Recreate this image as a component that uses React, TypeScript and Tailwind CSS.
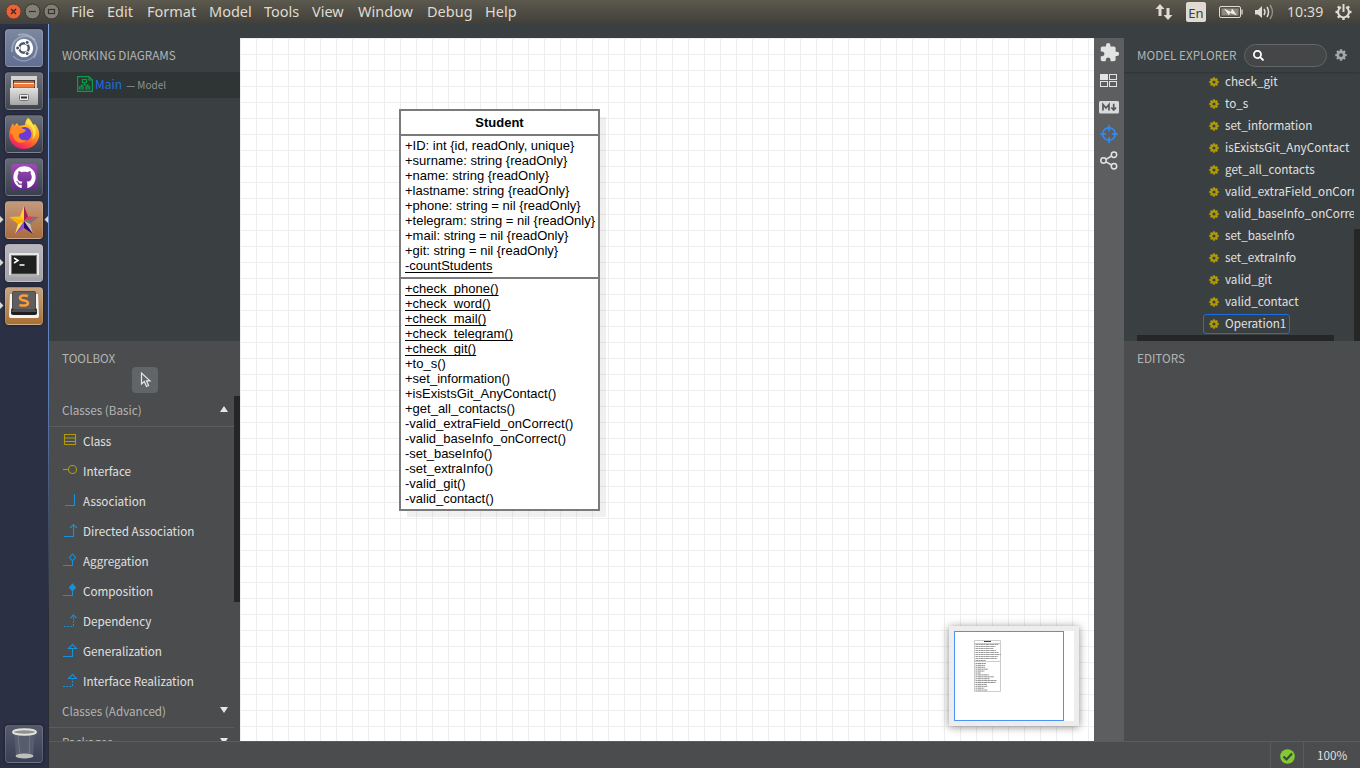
import React from "react";
import { FaSearch, FaGithub } from "react-icons/fa";
import { MdExtension } from "react-icons/md";

const attributes = [
  "+ID: int {id, readOnly, unique}",
  "+surname: string {readOnly}",
  "+name: string {readOnly}",
  "+lastname: string {readOnly}",
  "+phone: string = nil {readOnly}",
  "+telegram: string = nil {readOnly}",
  "+mail: string = nil {readOnly}",
  "+git: string = nil {readOnly}",
];

const staticOps = ["+check_phone()", "+check_word()", "+check_mail()", "+check_telegram()", "+check_git()"];

const operations = [
  "+to_s()",
  "+set_information()",
  "+isExistsGit_AnyContact()",
  "+get_all_contacts()",
  "-valid_extraField_onCorrect()",
  "-valid_baseInfo_onCorrect()",
  "-set_baseInfo()",
  "-set_extraInfo()",
  "-valid_git()",
  "-valid_contact()",
];

const explorer = [
  "check_git",
  "to_s",
  "set_information",
  "isExistsGit_AnyContact",
  "get_all_contacts",
  "valid_extraField_onCorrect",
  "valid_baseInfo_onCorrect",
  "set_baseInfo",
  "set_extraInfo",
  "valid_git",
  "valid_contact",
];

function Gear({ className, color }: { className: string; color: string }) {
  return (
    <svg className={className} viewBox="-8 -8 16 16" fill="none" stroke={color}>
      <circle r="4.2" strokeWidth="3.4" />
      {[0, 45, 90, 135].map((a) => (
        <path key={a} d="M0 -7.6V-5M0 5V7.6" strokeWidth="3" transform={`rotate(${a})`} />
      ))}
    </svg>
  );
}

function Tile({ className, children }: { className: string; children: React.ReactNode }) {
  return (
    <div
      className={`flex h-[38px] w-[38px] shrink-0 items-center justify-center rounded-[4px] border border-white/15 shadow-[0_0_3px_rgba(0,0,0,0.5)] ${className}`}
    >
      {children}
    </div>
  );
}

function Launcher() {
  return (
    <aside className="relative flex w-[49px] shrink-0 flex-col items-start gap-[5px] bg-[#2b3044] pt-[5px] pb-[5px] pl-[5px]">
      <Tile className="bg-linear-to-b from-[#7c879f] to-[#626e93]">
        <svg className="h-9 w-9" viewBox="0 0 36 36" fill="none">
          <path d="M6 22C5 9 18 1 29 10" stroke="#aab3c6" strokeWidth="2" opacity=".7" />
          <path d="M12 5C25 1 36 14 28 28" stroke="#c0c8d6" strokeWidth="1.5" opacity=".6" />
          <path d="M31 17C30 31 16 35 7 26" stroke="#aab3c6" strokeWidth="1.5" opacity=".6" />
          <circle cx="18" cy="18" r="9.2" fill="#fff" />
          <circle cx="18" cy="18" r="4.8" stroke="#4d5569" strokeWidth="2.4" />
          <g fill="#4d5569" stroke="#fff" strokeWidth="1">
            <circle cx="11.6" cy="18" r="2" />
            <circle cx="21.2" cy="12.4" r="2" />
            <circle cx="21.2" cy="23.6" r="2" />
          </g>
        </svg>
      </Tile>
      <Tile className="bg-linear-to-b from-[#6d7078] to-[#42464f]">
        <svg className="h-9 w-9" viewBox="0 0 36 36">
          <defs>
            <linearGradient id="cabinet" x2="0" y2="1">
              <stop stopColor="#e2e2e2" />
              <stop offset="1" stopColor="#a5a5a5" />
            </linearGradient>
          </defs>
          <path d="M5 3H31V16H5Z" fill="#d3d3d1" />
          <path d="M7 7H29V15H7Z" fill="#4b3932" />
          <path d="M8 8H28V15H8Z" fill="#b9683c" />
          <path d="M7.500 10.500H28.500V14H7.500Z" fill="#ee7a3c" />
          <path d="M8 10.500H28" stroke="#fff0df" />
          <path d="M4 15H32V31Q32 32 31 32H5Q4 32 4 31Z" fill="url(#cabinet)" />
          <rect x="13.500" y="21.500" width="9" height="6" rx="1" fill="#eee" stroke="#777" />
          <rect x="15" y="23.500" width="6" height="2" fill="#333" />
        </svg>
      </Tile>
      <Tile className="bg-linear-to-b from-[#6b6f7a] to-[#3a3f4e]">
        <svg className="h-9 w-9" viewBox="0 0 36 36">
          <defs>
            <linearGradient id="fox" x1=".8" y1="0" x2=".3" y2="1">
              <stop stopColor="#fff04a" />
              <stop offset=".4" stopColor="#ffa21f" />
              <stop offset=".75" stopColor="#ff4b3b" />
              <stop offset="1" stopColor="#e5157a" />
            </linearGradient>
          </defs>
          <path d="M22 2C24 3 26 6 27 9L29 8C32 12 34 16 33 21C31 29 25 33 18 33C10 33 3 27 3 19C3 14 5 10 7 7L8 10L11 7L13 10C16 9 18 9 19 9C19 6 20 4 22 2Z" fill="url(#fox)" />
          <circle cx="18.500" cy="18" r="7" fill="#6b3bd8" />
          <path d="M4 17C5 11 11 8 15 12L20 14C18 18 14 16 13 19C12 23 17 25 21 24C16 29 8 27 7 19Z" fill="#ff8a22" />
          <path d="M20 7C27 10 29 17 26 24C33 18 29 9 22 3Z" fill="#ffe14a" />
        </svg>
      </Tile>
      <Tile className="bg-linear-to-b from-[#656975] to-[#3a3f4e]">
        <div className="flex h-[26px] w-[26px] items-center justify-center rounded-[4px] bg-linear-to-b from-[#a04cb4] to-[#63298b]">
          <FaGithub className="h-[23px] w-[23px] text-white" />
        </div>
      </Tile>
      <Tile className="bg-linear-to-b from-[#c29a7c] to-[#a96c3d]">
        <svg className="h-9 w-9" viewBox="0 0 36 36">
          <path d="M18 4L14 14.500L18 19Z" fill="#ffcf2a" />
          <path d="M18 4L22 14.500L18 19Z" fill="#a51e49" />
          <path d="M33 15L22 14.500L18 19Z" fill="#ec3463" />
          <path d="M33 15L24 22L18 19Z" fill="#777" />
          <path d="M27 32L24 22L18 19Z" fill="#c4c4c4" />
          <path d="M27 32L18 26V19Z" fill="#2a0873" />
          <path d="M9 32L18 26V19Z" fill="#8b4be0" />
          <path d="M9 32L12 22L18 19Z" fill="#ffe04f" />
          <path d="M3 15L12 22L18 19Z" fill="#ffb000" />
          <path d="M3 15L14 14.500L18 19Z" fill="#ffc21c" />
        </svg>
      </Tile>
      <Tile className="bg-linear-to-b from-[#b9b7bd] to-[#a2a1a8]">
        <svg className="h-9 w-9" viewBox="0 0 36 36">
          <rect x="3" y="8" width="30" height="24" rx="1" fill="#e7e7e5" />
          <path d="M3 31H33" stroke="#777" />
          <rect x="5.500" y="10.500" width="25" height="18.500" fill="#1f2020" stroke="#777" />
          <path d="M8 13L12 15.500L8 18M13.500 20H18.500" fill="none" stroke="#fff" strokeWidth="1.500" />
        </svg>
      </Tile>
      <Tile className="bg-linear-to-b from-[#c6a382] to-[#a87132]">
        <svg className="h-9 w-9" viewBox="0 0 36 36">
          <path d="M4 6H32L33 28Q33 30 31 30H5Q3 30 3 28Z" fill="#f4f4f4" />
          <rect x="5" y="20" width="26" height="7" rx="2" fill="#1f1f1f" />
          <path d="M5.500 23H30.500" stroke="#999" strokeWidth=".8" />
          <rect x="6" y="3" width="24" height="19" rx="2" fill="#4c4c4c" />
          <rect x="7" y="4" width="22" height="17" rx="1" fill="#5f5f5f" />
          <path d="M22 8C19 7 14 7 14 10C14 13.500 22 11.500 22 15C22 18 17 18 13.500 17" fill="none" stroke="#ff9b38" strokeWidth="2.500" />
        </svg>
      </Tile>
      <div className="flex-1" />
      <Tile className="bg-linear-to-b from-[#555a6b] to-[#3a4055]">
        <svg className="h-9 w-9" viewBox="0 0 36 36">
          <path d="M8 7L10 30Q18 34 27 30L29 7Z" fill="#575d6c" />
          <path d="M12 9L14 30M24 9L23 30" stroke="#8a8f98" opacity=".5" />
          <ellipse cx="18.500" cy="30" rx="9" ry="2.500" fill="#bfc0ba" />
          <ellipse cx="18.500" cy="6" rx="11.500" ry="2.800" fill="#8f918f" stroke="#e3e3dd" strokeWidth="2" />
        </svg>
      </Tile>
      <svg className="absolute top-0 left-0 h-[320px] w-[49px]" viewBox="0 24 49 320" fill="#d8d8d8">
        <path d="M0 216L3.500 219.500L0 223ZM0 259L3.500 262.500L0 266ZM0 302L3.500 305.500L0 309ZM48 216L44.500 219.500L48 223Z" />
      </svg>
      <div className="absolute top-0 right-0 h-full w-px bg-linear-to-b from-[#7ea6e2] via-[#5a7fb8] via-50% to-[#2a2c33] to-80%" />
    </aside>
  );
}

function MenuBar() {
  const cls = "shrink-0 whitespace-nowrap";
  return (
    <header className="flex h-6 shrink-0 items-center bg-linear-to-b from-[#5c594f] to-[#413f39] font-['Noto_Sans','Open_Sans',sans-serif] text-[14.500px] text-[#dfdbd2]">
      <svg className="h-6 w-[71px] shrink-0" viewBox="0 0 71 24" fill="none">
        <circle cx="13.500" cy="11.500" r="7.500" fill="#ea6238" stroke="#66402f" />
        <path d="M11 9L16 14M16 9L11 14" stroke="#4b2418" strokeWidth="1.400" />
        <circle cx="32.500" cy="11.500" r="7.500" fill="#817f76" stroke="#37352f" />
        <path d="M29 11.500H36" stroke="#36342f" strokeWidth="1.200" />
        <circle cx="51.500" cy="11.500" r="7.500" fill="#817f76" stroke="#37352f" />
        <rect x="48.500" y="9.500" width="6" height="4" stroke="#36342f" strokeWidth="1.200" />
      </svg>
      <nav className="flex flex-1 pb-0.5 leading-[22px]">
        <span className={`${cls} w-9`}>File</span>
        <span className={`${cls} w-10`}>Edit</span>
        <span className={`${cls} w-[62px]`}>Format</span>
        <span className={`${cls} w-[55px]`}>Model</span>
        <span className={`${cls} w-12`}>Tools</span>
        <span className={`${cls} w-[46px]`}>View</span>
        <span className={`${cls} w-[69px]`}>Window</span>
        <span className={`${cls} w-[58px]`}>Debug</span>
        <span className={cls}>Help</span>
      </nav>
      <svg className="mr-[13px] h-6 w-[18px]" viewBox="1155 0 18 24" fill="#dfdbd2">
        <path d="M1160 4L1164.500 9H1161.500V16H1158.500V9H1155.500ZM1168 20L1163.500 15H1166.500V8H1169.500V15H1172.500Z" />
      </svg>
      <span className="flex h-5 w-5 items-center justify-center rounded-[2px] bg-[#dfdbd2] pt-[2px] text-[13px] leading-[18px] text-[#3c3b37]">En</span>
      <svg className="ml-3 h-6 w-[26px]" viewBox="1218 0 26 24" fill="none">
        <rect x="1219.500" y="6.500" width="21" height="11" rx="1.500" stroke="#dfdbd2" />
        <rect x="1221.500" y="8.500" width="17" height="7" fill="#8d8a82" />
        <path d="M1242 9.500V14.500" stroke="#dfdbd2" strokeWidth="1.300" />
        <path d="M1224 8.500L1231 12L1232 8.500L1237 15.500L1230 12.800L1229 15.500Z" fill="#f2eee4" />
      </svg>
      <svg className="ml-[10px] h-6 w-5" viewBox="1254 0 20 24" fill="none" stroke="#dfdbd2">
        <path d="M1255 10H1258L1262 6V18L1258 14.500H1255Z" fill="#dfdbd2" stroke="none" />
        <path d="M1264 9Q1266 12 1264 15" strokeWidth="1.500" />
        <path d="M1267 7Q1270 12 1267 17" strokeWidth="1.500" />
        <path d="M1270 5Q1275 12 1270 19" strokeWidth="1.300" opacity=".5" />
      </svg>
      <span className="ml-[13px] w-[48px] text-[14.200px] leading-6 pb-px">10:39</span>
      <svg className="mr-[8px] h-6 w-[17px]" viewBox="-8.500 -12 17 24" fill="none" stroke="#dfdbd2">
        <path d="M-2.500 -4.800A5.400 5.400 0 1 0 2.500 -4.800" strokeWidth="2" />
        <path d="M0 -8V0" strokeWidth="2" />
        {[45, 90, 135, 180, 225, 270, 315].map((a) => (
          <path key={a} d="M0 -8V-5.500" strokeWidth="2.400" transform={`rotate(${a})`} />
        ))}
      </svg>
    </header>
  );
}

function ToolIcon({ name }: { name: string }) {
  const base = "M0 12.500H9.500";
  return (
    <svg className="h-4 w-[15px] shrink-0" viewBox="0 0 15 16" fill="none" stroke={name === "Class" || name === "Interface" ? "#b09a07" : "#1d8fd6"} strokeWidth="1.100">
      {name === "Class" && <path d="M1.500 1.500H12.500V11.500H1.500ZM1.500 5H12.500M1.500 8.500H12.500" />}
      {name === "Interface" && (
        <>
          <path d="M0 6.500H5.500" />
          <circle cx="9.500" cy="6.500" r="4" />
        </>
      )}
      {name === "Association" && <path d="M2 12.500H11.500V1" />}
      {name === "Directed Association" && <path d="M1 13.500H10.500V1.500M7 5L10.500 1.500L14 5" />}
      {name === "Aggregation" && <path d={`${base}V8M9.500 1L12.500 4.500L9.500 8L6.500 4.500Z`} />}
      {name === "Composition" && (
        <>
          <path d={`${base}V7`} />
          <path d="M9.500 1L12.500 4.500L9.500 8L6.500 4.500Z" fill="#1d8fd6" />
        </>
      )}
      {name === "Dependency" && (
        <>
          <path d="M1 13.500H10.500V3" strokeDasharray="2 1.300" />
          <path d="M7.500 5L10.500 2L13.500 5" />
        </>
      )}
      {name === "Generalization" && <path d="M0 13.500H9.500V5.500M5.500 5.500L9.500 1.500L13.500 5.500Z" />}
      {name === "Interface Realization" && (
        <>
          <path d="M0 13.500H9.500V6" strokeDasharray="2 1.300" />
          <path d="M5.500 5.500L9.500 1.500L13.500 5.500Z" />
        </>
      )}
    </svg>
  );
}

function GroupHeader({ label, open }: { label: string; open?: boolean }) {
  return (
    <div className="flex h-[31px] w-[185px] shrink-0 items-center justify-between border-b border-[#5a5c5e] pr-[6px] pl-[13px] text-[#b4b5b6]">
      <span className="pb-[3px]">{label}</span>
      <svg className={`h-[6px] w-2 ${open ? "mb-[4px]" : "mb-[5px]"}`} viewBox="0 0 8 6" fill="#e6e6e6">
        <path d={open ? "M4 0L8 6H0Z" : "M0 0H8L4 6Z"} />
      </svg>
    </div>
  );
}

function LeftPanel() {
  const tools = ["Class", "Interface", "Association", "Directed Association", "Aggregation", "Composition", "Dependency", "Generalization", "Interface Realization"];
  return (
    <section className="flex w-[191px] shrink-0 flex-col">
      <div className="h-[317px] shrink-0 bg-[#3a3f41] pt-[20px]">
        <h2 className="h-[28px] pl-[13px] leading-[21px] text-[#b3b5b5]">WORKING DIAGRAMS</h2>
        <div className="flex h-[26px] items-center bg-[#2f3534] pb-[2px] pl-7">
          <svg className="h-4 w-4" viewBox="0 0 16 16" fill="none" stroke="#0b9a47" strokeWidth="1.200">
            <path d="M.6 .6H12L15.400 4V15.400H.6ZM12 .6V4H15.400" />
            <path d="M5.500 3.500H9.500V6.500H5.500ZM7.500 6.500V9M4.500 11V9H11V11M2.500 10.800H6V13H2.500ZM9 10.800H12.500V13H9Z" />
          </svg>
          <span className="ml-[2px] text-[12px] text-[#1a6fe0]">Main</span>
          <span className="ml-[4px] pt-px text-[10px] text-[#8e9293]">— Model</span>
        </div>
      </div>
      <div className="flex min-h-0 flex-1 flex-col bg-[#4b4c4d]">
        <h2 className="h-[26px] shrink-0 pt-[7px] pl-[13px] leading-[20px] text-[#b3b5b5]">TOOLBOX</h2>
        <div className="mb-[3px] ml-[83px] flex h-[26px] w-[26px] shrink-0 items-center justify-center rounded-[4px] bg-[#626567]">
          <svg className="ml-[2px] h-[18px] w-3" viewBox="0 0 12 18" fill="none" stroke="#e8e8e8" strokeWidth="1.200">
            <path d="M1.500 2V13L4.300 10.500L6.500 15.500L8.500 14.500L6.500 9.800H10Z" />
          </svg>
        </div>
        <div className="flex min-h-0 flex-1 overflow-hidden">
          <div className="flex w-[185px] flex-col">
            <GroupHeader label="Classes (Basic)" open />
            {tools.map((t) => (
              <div key={t} className="flex h-[30px] shrink-0 items-center pl-[14px] text-[#e0e1e1]">
                <div className="-mt-[2px] flex w-5">
                  <ToolIcon name={t} />
                </div>
                <span className="pb-[3px] whitespace-nowrap">{t}</span>
              </div>
            ))}
            <GroupHeader label="Classes (Advanced)" />
            <GroupHeader label="Packages" />
          </div>
          <div className="h-[206px] w-[6px] bg-[#262626]" />
        </div>
      </div>
    </section>
  );
}

function ClassNode() {
  return (
    <div className="absolute top-[71px] left-[159px] w-[201px] border-2 border-[#7a7a7a] bg-white font-['Liberation_Sans',Arial,sans-serif] text-[13px] leading-[15px] whitespace-nowrap text-black shadow-[7px_7px_0_-1px_rgba(0,0,0,0.06)]">
      <div className="h-[25px] border-b-2 border-[#7a7a7a] pt-[4px] text-center font-bold">Student</div>
      <div className="h-[143px] border-b-2 border-[#7a7a7a] pt-[2px] pl-1">
        {attributes.map((a) => (
          <div key={a}>{a}</div>
        ))}
        <div className="underline underline-offset-2">-countStudents</div>
      </div>
      <div className="h-[230px] pt-[2px] pl-1">
        {staticOps.map((o) => (
          <div key={o} className="underline underline-offset-2 [text-decoration-skip-ink:none]">{o}</div>
        ))}
        {operations.map((o) => (
          <div key={o}>{o}</div>
        ))}
      </div>
    </div>
  );
}

function MiniMap() {
  const first = [...attributes, "-countStudents"];
  const second = [...staticOps, ...operations];
  return (
    <div className="absolute right-[15px] bottom-[15px] h-[100px] w-[130px] bg-[#ededed] p-[5px] shadow-[0_1px_8px_rgba(0,0,0,0.45)]">
      <div className="h-[90px] bg-white">
        <div className="h-[90px] w-[110px] border border-[#4a94f7]">
          <svg className="h-[88px] w-[108px]" viewBox="955 632 108 88" fill="none">
            <path d="M974.500 640.500H1000.500V691.500H974.500ZM974.500 643.500H1000.500M974.500 661.500H1000.500" stroke="#ccc" />
            <path d="M984 641.500H991" stroke="#444" />
            {first.map((s, i) => (
              <path key={s} d={`M975.500 ${644.500 + i * 2}h${s.length * 0.74}`} stroke="#444" strokeWidth=".9" strokeDasharray="3 .4 1.500 .3" opacity=".6" />
            ))}
            {second.map((s, i) => (
              <path key={s} d={`M975.500 ${663.500 + i * 1.900}h${s.length * 0.74}`} stroke="#333" strokeWidth=".9" strokeDasharray="2 .4 3.500 .3" opacity=".6" />
            ))}
          </svg>
        </div>
      </div>
    </div>
  );
}

function SideTools() {
  return (
    <aside className="mt-[14px] flex w-[30px] shrink-0 flex-col items-center bg-[#5c5e60] pt-[4px]">
      <MdExtension className="h-[21px] w-[21px] text-[#e2e3e3]" />
      <svg className="mt-[10px] h-[16px] w-[18px]" viewBox="0 0 18 16" fill="none" stroke="#e2e3e3">
        <rect x=".5" y="1.500" width="7" height="5" fill="#e2e3e3" />
        <rect x="9.500" y="1.500" width="7" height="5" />
        <rect x=".5" y="8.500" width="7" height="5" />
        <rect x="9.500" y="8.500" width="7" height="5" />
      </svg>
      <svg className="mt-[12px] h-[13px] w-5" viewBox="0 0 20 13">
        <rect width="20" height="12.500" rx="1.500" fill="#d9dada" />
        <path d="M4 9.500V3.500L7 7L10 3.500V9.500M14.700 2.800V8.500M12.300 6.500L14.700 9L17.100 6.500" fill="none" stroke="#55585a" strokeWidth="1.700" />
      </svg>
      <svg className="mt-[11px] h-[18px] w-[18px]" viewBox="0 0 18 18" fill="none" stroke="#2f8bff" strokeWidth="1.600">
        <circle cx="9" cy="9" r="6.300" />
        <path d="M9 0V6M9 12V18M0 9H6M12 9H18" />
      </svg>
      <svg className="mt-[8px] h-[19px] w-[18px]" viewBox="0 0 18 19" fill="none" stroke="#e2e3e3" strokeWidth="1.500">
        <circle cx="3.500" cy="9.500" r="2.700" />
        <circle cx="14" cy="3.700" r="2.700" />
        <circle cx="14" cy="15.300" r="2.700" />
        <path d="M6 8.300L11.500 5M6 10.800L11.500 14" />
      </svg>
    </aside>
  );
}

function RightPanel() {
  return (
    <section className="flex w-[236px] shrink-0 flex-col">
      <div className="flex h-[317px] shrink-0 flex-col overflow-hidden bg-[#3a3f41]">
        <div className="flex h-12 shrink-0 items-center pt-[14px] pl-[13px] shadow-[0_1px_2px_rgba(0,0,0,0.2)]">
          <h2 className="w-[107px] whitespace-nowrap text-[#b3b5b5]">MODEL EXPLORER</h2>
          <div className="flex h-[23px] w-[83px] items-center rounded-full border border-[#626668] bg-[#444648] pl-[8px]">
            <FaSearch className="h-[11px] w-[11px] text-white" />
          </div>
          <Gear className="ml-[8px] h-3 w-3" color="#a4a7a8" />
        </div>
        <div className="-mt-px flex min-h-0 flex-1">
          <div className="flex w-[230px] flex-col overflow-hidden">
            {explorer.map((e) => (
              <div key={e} className="flex h-[22px] shrink-0 items-center pl-[85px] whitespace-nowrap text-[#e0e1e1]">
                <Gear className="mr-[6px] h-[10px] w-[10px] shrink-0" color="#b09a07" />
                <span className="pb-[3px]">{e}</span>
              </div>
            ))}
            <div className="mt-px ml-[79px] flex h-5 w-[87px] shrink-0 items-center rounded-[3px] border border-[#1a6fe0] pl-[5px] text-[#e0e1e1]">
              <Gear className="mr-[6px] h-[10px] w-[10px] shrink-0" color="#b09a07" />
              <span className="pb-[3px]">Operation1</span>
            </div>
            <div className="mt-px ml-[13px] h-[6px] w-[197px] shrink-0 bg-[#262626]" />
          </div>
          <div className="mt-[158px] w-[6px] bg-[#262626]" />
        </div>
      </div>
      <div className="flex-1 bg-[#4b4c4d] pt-[7px] pl-[13px] leading-[20px] text-[#b3b5b5]">EDITORS</div>
    </section>
  );
}

export default function App() {
  return (
    <div className="flex h-[768px] w-[1360px] flex-col overflow-hidden bg-[#3a3f41] font-['Noto_Sans_CJK_SC',sans-serif] text-[11.700px]">
      <MenuBar />
      <div className="flex min-h-0 flex-1">
        <Launcher />
        <div className="flex min-w-0 flex-1 flex-col">
          <div className="flex min-h-0 flex-1">
            <LeftPanel />
            <main className="relative mt-[14px] flex-1 overflow-hidden bg-white bg-[linear-gradient(to_right,#eeeeee_1px,transparent_1px),linear-gradient(to_bottom,#eeeeee_1px,transparent_1px)] bg-[size:16px_16px]">
              <ClassNode />
              <MiniMap />
            </main>
            <SideTools />
            <RightPanel />
          </div>
          <footer className="flex h-[27px] shrink-0 justify-end border-t border-[#5a5c5e] bg-[#4b4c4d]">
            <div className="flex w-[33px] items-center justify-center border-l border-[#5a5c5e] pt-[3px]">
              <svg className="h-[15px] w-[15px]" viewBox="0 0 15 15">
                <circle cx="7.500" cy="7.500" r="7.300" fill="#83c933" />
                <path d="M3.500 7.500L6.500 10.500L12 4.500" fill="none" stroke="#3c4a32" strokeWidth="2.200" />
              </svg>
            </div>
            <div className="w-[57px] border-l border-[#5a5c5e] pl-[13px] leading-[25px] text-[#e0e1e1]">100%</div>
          </footer>
        </div>
      </div>
    </div>
  );
}
